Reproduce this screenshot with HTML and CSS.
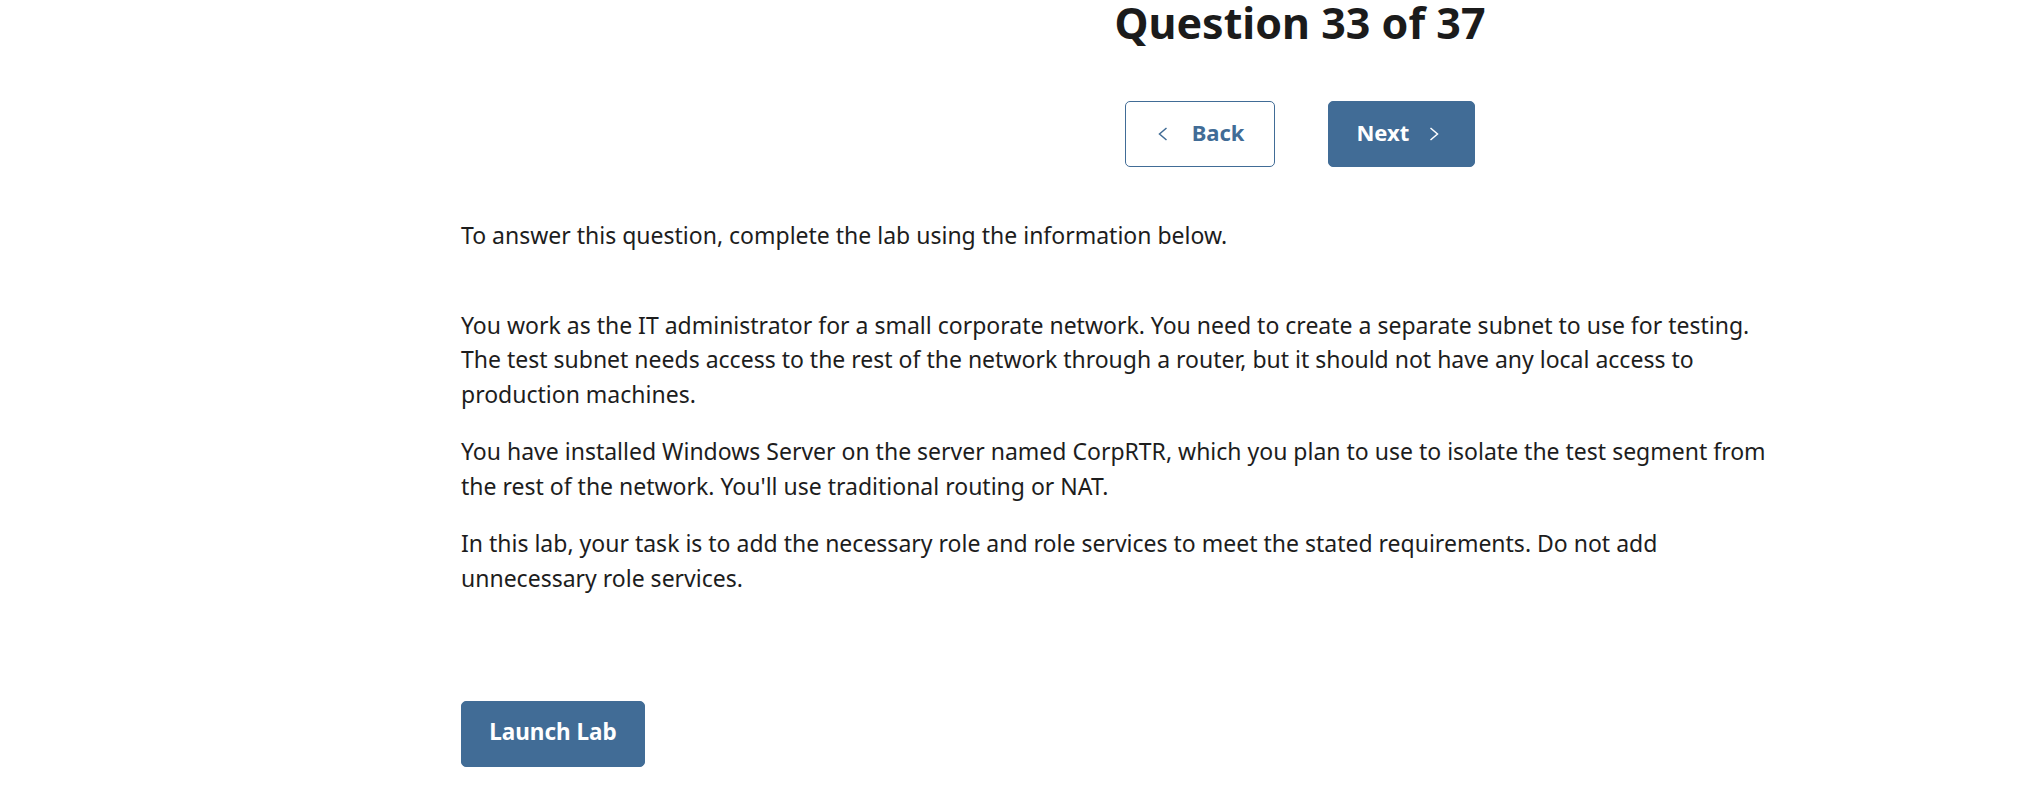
FILE: index.html
```html
<!DOCTYPE html>
<html lang="en">
<head>
<meta charset="utf-8">
<title>Question 33 of 37</title>
<link rel="stylesheet" href="styles.css">
</head>
<body>
<div class="page">
  <header class="top">
    <h1 class="title">Question 33 of 37</h1>
    <nav class="nav">
      <button class="btn btn-back" type="button">
        <svg class="chev" width="10" height="14" viewBox="0 0 10 14" aria-hidden="true"><polyline points="8.5,1 1.5,7 8.5,13" fill="none" stroke="currentColor" stroke-width="1.5"/></svg>
        <span>Back</span>
      </button>
      <button class="btn btn-next" type="button">
        <span>Next</span>
        <svg class="chev" width="10" height="14" viewBox="0 0 10 14" aria-hidden="true"><polyline points="1.5,1 8.5,7 1.5,13" fill="none" stroke="currentColor" stroke-width="1.5"/></svg>
      </button>
    </nav>
  </header>
  <main class="content">
    <p class="intro">To answer this question, complete the lab using the information below.</p>
    <div class="scenario">
      <p>You work as the IT administrator for a small corporate network. You need to create a separate subnet to use for testing. The test subnet needs access to the rest of the network through a router, but it should not have any local access to production machines.</p>
      <p>You have installed Windows Server on the server named CorpRTR, which you plan to use to isolate the test segment from the rest of the network. You'll use traditional routing or NAT.</p>
      <p>In this lab, your task is to add the necessary role and role services to meet the stated requirements. Do not add unnecessary role services.</p>
    </div>
    <button class="btn btn-launch" type="button"><span>Launch Lab</span></button>
  </main>
</div>
</body>
</html>
```

FILE: styles.css
```css
html, body {
  margin: 0;
  padding: 0;
  background: #ffffff;
}
body {
  font-family: "Noto Sans", "Open Sans", sans-serif;
  color: #1d1d1d;
}
.page {
  width: 2020px;
}
.top {
  padding-left: 580px;
  display: flex;
  flex-direction: column;
  align-items: center;
}
.title {
  margin: 0;
  font-size: 43px;
  line-height: 45px;
  font-weight: 700;
  color: #1b1b1b;
}
.nav {
  margin-top: 56px;
  display: flex;
  gap: 53px;
}
.btn {
  font-family: "Noto Sans", "Open Sans", sans-serif;
  font-size: 22px;
  line-height: 30px;
  font-weight: 700;
  height: 66px;
  border-radius: 5px;
  display: flex;
  align-items: center;
  cursor: pointer;
  box-sizing: border-box;
  padding-top: 0;
  padding-bottom: 4px;
}
.btn-back {
  background: #ffffff;
  color: #416c96;
  border: 1px solid #416c96;
  padding-left: 32px;
  padding-right: 30px;
  gap: 24px;
}
.btn-next {
  background: #416c96;
  color: #ffffff;
  border: 1px solid #416c96;
  padding-left: 27px;
  padding-right: 35px;
  gap: 20px;
}
.chev {
  display: block;
  margin-top: 4px;
}
.content {
  margin-left: 461px;
  width: 1320px;
  padding-top: 51px;
  font-size: 23px;
  line-height: 34.5px;
}
.intro {
  margin: 0;
}
.scenario {
  margin-top: 55px;
}
.scenario p {
  margin: 0 0 23px 0;
}
.scenario p:last-child {
  margin-bottom: 0;
}
.btn-launch {
  margin-top: 106px;
  background: #416c96;
  color: #ffffff;
  border: 1px solid #416c96;
  padding-left: 0;
  padding-right: 0;
  width: 184px;
  justify-content: center;
  font-size: 22.5px;
}
```
